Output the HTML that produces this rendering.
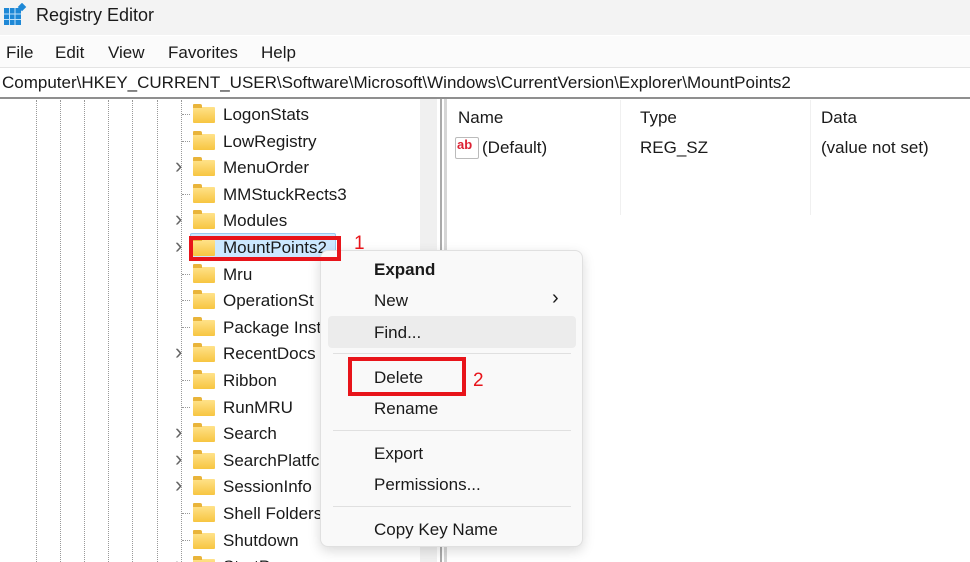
<!DOCTYPE html>
<html><head><style>
html,body{margin:0;width:970px;height:562px;overflow:hidden}
body{background:#fff;font-family:"Liberation Sans",sans-serif;color:#1a1a1a;position:relative}
.a{position:absolute;white-space:nowrap}
.t{font-size:17px}
.dl{position:absolute;top:100px;height:462px;border-left:1px dotted #999}
.f{position:absolute;width:22px;height:16px;background:linear-gradient(#ffe28a,#f7c541);border-radius:1px}
.f:before{content:"";position:absolute;left:0;top:-3px;width:9px;height:4px;background:#e9b43a;border-radius:1px 2px 0 0}
.ch{position:absolute;font-size:22px;color:#666;line-height:1}
.hd{position:absolute;width:8px;border-top:1px dotted #999}
</style></head><body>
<div class="a" style="left:0;top:0;width:970px;height:35px;background:#f3f3f3"></div>
<svg class="a" style="left:3px;top:3px" width="24" height="24" viewBox="0 0 24 24"><rect x="1" y="5" width="17" height="17" fill="#1e88d6"/><g stroke="#bfe1fa" stroke-width="1"><path d="M1 11h17M1 16.5h17M6.5 5v17M12 5v17"/></g><rect x="16" y="1" width="6" height="6" fill="#1e88d6" transform="rotate(45 19 4)"/></svg>
<div class="a t" style="left:36px;top:5px;font-size:18px">Registry Editor</div>
<div class="a" style="left:0;top:36px;width:970px;height:31px;background:#fbfbfb;border-bottom:1px solid #e4e4e4"></div>
<div class="a t" style="left:6px;top:43px">File</div>
<div class="a t" style="left:55px;top:43px">Edit</div>
<div class="a t" style="left:108px;top:43px">View</div>
<div class="a t" style="left:168px;top:43px">Favorites</div>
<div class="a t" style="left:261px;top:43px">Help</div>
<div class="a" style="left:0;top:68px;width:970px;height:29px;background:#fff;border-bottom:2px solid #8f8f8f"></div>
<div class="a t" style="left:2px;top:73px">Computer\HKEY_CURRENT_USER\Software\Microsoft\Windows\CurrentVersion\Explorer\MountPoints2</div>
<div class="a" style="left:420px;top:99px;width:17px;height:463px;background:#f0f0f0"></div>
<div class="a" style="left:440px;top:99px;width:2px;height:463px;background:#aaa"></div>
<div class="a" style="left:444px;top:99px;width:3px;height:463px;background:#d6d6d6"></div>
<div class="dl" style="left:36px"></div><div class="dl" style="left:60px"></div><div class="dl" style="left:84px"></div><div class="dl" style="left:108px"></div><div class="dl" style="left:132px"></div><div class="dl" style="left:157px"></div><div class="dl" style="left:181px"></div>
<div class="a" style="left:190px;top:233px;width:146px;height:27px;background:#cce8ff;border:1px solid #99c9ef;border-radius:2px;box-sizing:border-box"></div>
<div id="tree"></div>
<script>
var items=[["LogonStats",0],["LowRegistry",0],["MenuOrder",1],["MMStuckRects3",0],["Modules",1],["MountPoints2",1],["Mru",0],["OperationSt",0],["Package Inst",0],["RecentDocs",1],["Ribbon",0],["RunMRU",0],["Search",1],["SearchPlatfc",1],["SessionInfo",1],["Shell Folders",0],["Shutdown",0],["StartPage",1]];
var h="";items.forEach(function(it,i){var y=114+i*26.6;
h+='<div class="f" style="left:193px;top:'+(y-7)+'px"></div>';
h+='<div class="a t" style="left:223px;top:'+(y-9)+'px;'+(i>=6?'width:98px;overflow:hidden':'')+'">'+it[0]+'</div>';
if(it[1])h+='<div class="ch" style="left:175px;top:'+(y-12)+'px">&#x203A;</div>';else h+='<div class="hd" style="left:182px;top:'+y+'px"></div>';});
document.getElementById("tree").innerHTML=h;
</script>
<div class="a" style="left:620px;top:100px;height:115px;border-left:1px solid #f0f0f0"></div>
<div class="a" style="left:810px;top:100px;height:115px;border-left:1px solid #f0f0f0"></div>
<div class="a t" style="left:458px;top:108px">Name</div>
<div class="a t" style="left:640px;top:108px">Type</div>
<div class="a t" style="left:821px;top:108px">Data</div>
<div class="a" style="left:455px;top:137px;width:22px;height:20px;background:#fff;border:1px solid #bbb;border-radius:2px"></div>
<div class="a" style="left:457px;top:137px;font-size:13px;font-weight:bold;color:#d23">ab</div>
<div class="a t" style="left:482px;top:138px">(Default)</div>
<div class="a t" style="left:640px;top:138px">REG_SZ</div>
<div class="a t" style="left:821px;top:138px">(value not set)</div>
<div class="a" style="left:320px;top:250px;width:263px;height:297px;background:#f9f9f9;border:1px solid #e0e0e0;border-radius:8px;box-shadow:0 4px 12px rgba(0,0,0,.15);box-sizing:border-box"></div>
<div class="a" style="left:328px;top:316px;width:248px;height:32px;background:#ececec;border-radius:4px"></div>
<div class="a" style="left:333px;top:353px;width:238px;border-top:1px solid #e0e0e0"></div>
<div class="a" style="left:333px;top:430px;width:238px;border-top:1px solid #e0e0e0"></div>
<div class="a" style="left:333px;top:506px;width:238px;border-top:1px solid #e0e0e0"></div>
<div class="a t" style="left:374px;top:260px;font-weight:bold">Expand</div>
<div class="a t" style="left:374px;top:291px">New</div>
<div class="a" style="left:552px;top:287px;font-size:20px">&#x203A;</div>
<div class="a t" style="left:374px;top:323px">Find...</div>
<div class="a t" style="left:374px;top:368px">Delete</div>
<div class="a t" style="left:374px;top:399px">Rename</div>
<div class="a t" style="left:374px;top:444px">Export</div>
<div class="a t" style="left:374px;top:475px">Permissions...</div>
<div class="a t" style="left:374px;top:520px">Copy Key Name</div>
<div class="a" style="left:189px;top:236px;width:152px;height:25px;border:4px solid #e8141a;box-sizing:border-box"></div>
<div class="a" style="left:354px;top:233px;font-size:19px;color:#e8141a">1</div>
<div class="a" style="left:348px;top:357px;width:118px;height:39px;border:4px solid #e8141a;box-sizing:border-box"></div>
<div class="a" style="left:473px;top:370px;font-size:19px;color:#e8141a">2</div>
</body></html>
